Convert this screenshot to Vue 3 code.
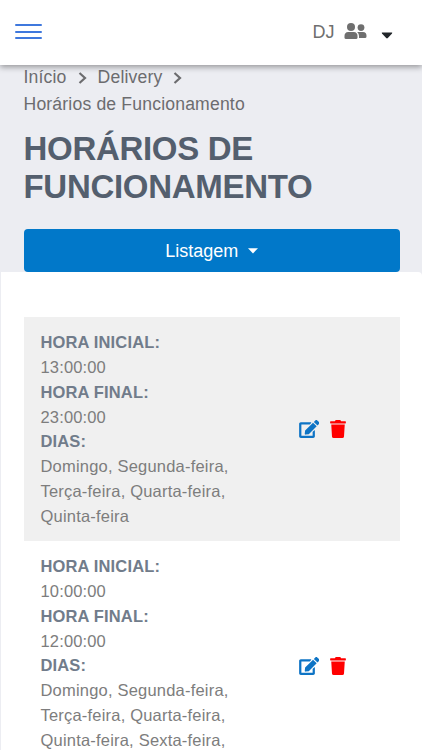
<template>
  <div class="page">
    <header class="topbar">
      <button class="menu" aria-label="Menu">
        <span></span>
        <span></span>
        <span></span>
      </button>
      <div class="user">
        <span class="user-name">DJ</span>
        <svg class="user-icon" viewBox="0 0 23 17">
          <circle cx="7" cy="4" r="4" />
          <path d="M4.2 9H9.8Q13.5 9.3 13.5 13V14.5Q13.5 16 12 16H2Q.5 16 .5 14.5V13Q.5 9.3 4.2 9Z" />
          <circle cx="17" cy="4.6" r="3.4" />
          <path d="M14.3 9H19Q22.5 9.3 22.5 12.8V13.5Q22.5 15 21 15H15V13Q15 10.6 13.2 9.3Q13.7 9 14.3 9Z" />
        </svg>
        <svg class="user-caret" viewBox="0 0 12 7">
          <path d="M1.2.5H10.8Q11.7.7 11 1.6L6.8 6Q6 6.8 5.2 6L1 1.6Q.3.7 1.2.5Z" />
        </svg>
      </div>
    </header>

    <section class="heading">
      <nav class="breadcrumb">
        <template v-for="(item, index) in breadcrumb" :key="item">
          <a>{{ item }}</a>
          <svg v-if="index < breadcrumb.length - 1" class="chevron" viewBox="0 0 9 12">
            <path d="M1.5 1L7 6L1.5 11" />
          </svg>
        </template>
      </nav>
      <h1>HORÁRIOS DE<br>FUNCIONAMENTO</h1>
      <button class="btn-list">
        <span>Listagem</span>
        <svg viewBox="0 0 10 6"><path d="M0 .2H10L5 5.4Z" /></svg>
      </button>
    </section>

    <main class="card">
      <div class="row" v-for="schedule in schedules" :key="schedule.id">
        <div class="info">
          <strong>HORA INICIAL:</strong>
          <span>{{ schedule.start }}</span>
          <strong>HORA FINAL:</strong>
          <span>{{ schedule.end }}</span>
          <strong>DIAS:</strong>
          <span class="days">{{ schedule.days.join(', ') }}</span>
        </div>
        <div class="actions">
          <button aria-label="Editar">
            <svg class="edit" viewBox="0 0 576 512">
              <path d="M402.6 83.2l90.2 90.2c3.8 3.8 3.8 10 0 13.8L274.4 405.6l-92.800 10.300c-12.400 1.400-22.900-9.100-21.500-21.500l10.300-92.800L388.800 83.200c3.800-3.800 10-3.800 13.800 0zm162-22.900l-48.800-48.800c-15.200-15.200-39.900-15.200-55.200 0l-35.400 35.400c-3.800 3.800-3.800 10 0 13.800l90.200 90.200c3.800 3.800 10 3.800 13.800 0l35.400-35.400c15.200-15.300 15.200-40 0-55.200zM384 346.200V448H64V128h229.800c3.200 0 6.200-1.300 8.500-3.500l40-40c7.600-7.600 2.200-20.500-8.500-20.500H48C21.500 64 0 85.500 0 112v352c0 26.500 21.500 48 48 48h352c26.500 0 48-21.500 48-48V306.200c0-10.700-12.900-16-20.500-8.500l-40 40c-2.200 2.300-3.500 5.300-3.500 8.500z" />
            </svg>
          </button>
          <button aria-label="Excluir">
            <svg class="trash" viewBox="0 0 448 512">
              <path d="M432 32H312l-9.400-18.700A24 24 0 0 0 281.100 0H166.800a23.720 23.720 0 0 0-21.400 13.300L136 32H16A16 16 0 0 0 0 48v32a16 16 0 0 0 16 16h416a16 16 0 0 0 16-16V48a16 16 0 0 0-16-16zM32 128L53.200 467a48 48 0 0 0 47.900 45h245.800a48 48 0 0 0 47.900-45L416 128z" />
            </svg>
          </button>
        </div>
      </div>
    </main>
  </div>
</template>

<script setup>
import { ref } from 'vue';

const breadcrumb = ['Início', 'Delivery', 'Horários de Funcionamento'];

const schedules = ref([
  {
    id: 1,
    start: '13:00:00',
    end: '23:00:00',
    days: ['Domingo', 'Segunda-feira', 'Terça-feira', 'Quarta-feira', 'Quinta-feira']
  },
  {
    id: 2,
    start: '10:00:00',
    end: '12:00:00',
    days: ['Domingo', 'Segunda-feira', 'Terça-feira', 'Quarta-feira', 'Quinta-feira', 'Sexta-feira', 'Sábado']
  }
]);
</script>

<style>
body {
  margin: 0;
  overflow: hidden;
}
</style>

<style scoped>
.page {
  height: 750px;
  overflow: hidden;
  display: flex;
  flex-direction: column;
  background-color: #ecedf2;
  font-family: "Liberation Sans", Arial, sans-serif;
}

button {
  padding: 0;
  border: none;
  background: none;
  font-family: inherit;
  cursor: pointer;
}

svg {
  display: block;
  flex: none;
}

.topbar {
  flex: none;
  height: 65px;
  box-sizing: border-box;
  padding: 0 29.5px 0 15px;
  display: flex;
  justify-content: space-between;
  align-items: center;
  background-color: white;
  box-shadow: 0 2px 6px rgba(0, 0, 0, 0.38);
  z-index: 1;
}

.menu {
  display: flex;
  flex-direction: column;
  gap: 4.5px;
  width: 27px;
  margin-top: -1.5px;
}

.menu span {
  height: 2px;
  border-radius: 1px;
  background-color: #3f78dd;
}

.user {
  display: flex;
  align-items: center;
  margin-top: -1px;
  color: #6f6f6f;
}

.user-name {
  font-size: 18px;
}

.user-icon {
  width: 23px;
  height: 17px;
  margin: -1px 0 0 9px;
  fill: #6f6f6f;
}

.user-caret {
  width: 12px;
  height: 7px;
  margin: 6px 0 0 14px;
  fill: #212529;
}

.heading {
  flex: none;
  height: 207px;
  box-sizing: border-box;
  padding: 0 22px 0 23.5px;
  display: flex;
  flex-direction: column;
}

.breadcrumb {
  display: flex;
  flex-wrap: wrap;
  align-items: center;
  margin-top: -1px;
  font-size: 17.6px;
  letter-spacing: 0.17px;
  line-height: 27px;
  color: #6c6c6f;
}

.chevron {
  width: 9px;
  height: 12px;
  margin: 0 11px;
  fill: none;
  stroke: #6c6c6f;
  stroke-width: 2.2;
}

h1 {
  margin: 11.5px 0 0;
  font-size: 33px;
  line-height: 38.5px;
  letter-spacing: -0.3px;
  color: #545f6e;
}

.btn-list {
  height: 43px;
  margin-top: auto;
  padding-top: 1px;
  display: flex;
  justify-content: center;
  align-items: center;
  gap: 10px;
  border-radius: 4px;
  background-color: #0178c9;
  color: white;
  font-size: 18px;
}

.btn-list svg {
  width: 10px;
  height: 6px;
  fill: white;
}

.card {
  flex: 1;
  margin-left: 1px;
  padding: 45.2px 22px 0 22.5px;
  border-radius: 0 4px 0 0;
  background-color: white;
}

.row {
  display: flex;
  align-items: center;
  padding: 13.1px 17px;
}

.row:nth-child(odd) {
  background-color: #f0f0f0;
}

.info {
  width: 200px;
  display: flex;
  flex-direction: column;
  align-items: flex-start;
  font-size: 16.5px;
  line-height: 24.75px;
  letter-spacing: 0.15px;
  color: #7d7d7d;
}

.info strong {
  color: #717c8b;
}

.info .days {
  letter-spacing: 0.2px;
}

.actions {
  display: flex;
  gap: 11.3px;
  margin-left: 58px;
}

.edit {
  width: 20.5px;
  height: 18px;
  fill: #0e74c5;
}

.trash {
  width: 16px;
  height: 18px;
  fill: #ff0000;
}
</style>
